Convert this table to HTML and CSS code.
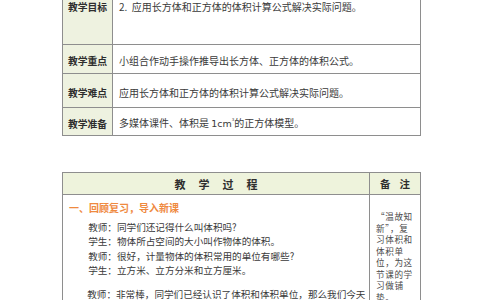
FILE: index.html
```html
<!DOCTYPE html>
<html lang="zh-CN">
<head>
<meta charset="utf-8">
<link rel="stylesheet" href="styles.css">
</head>
<body>
<div class="page">
  <table class="info">
    <tr class="r-goal">
      <th class="label label-goal">教学目标</th>
      <td class="content top">
        <p class="item">1.&nbsp;&nbsp;理解并掌握长方体和正方体的体积计算公式。</p>
        <p class="item">2.&nbsp;&nbsp;应用长方体和正方体的体积计算公式解决实际问题。</p>
      </td>
    </tr>
    <tr class="r-key">
      <th class="label">教学重点</th>
      <td class="content">小组合作动手操作推导出长方体、正方体的体积公式。</td>
    </tr>
    <tr class="r-hard">
      <th class="label">教学难点</th>
      <td class="content">应用长方体和正方体的体积计算公式解决实际问题。</td>
    </tr>
    <tr class="r-prep">
      <th class="label">教学准备</th>
      <td class="content">多媒体课件、体积是 <span class="unit">1cm<sup>3</sup></span>的正方体模型。</td>
    </tr>
  </table>

  <table class="process">
    <tr class="head">
      <th class="h-main"><span class="spaced">教学过程</span></th>
      <th class="h-note"><span class="spaced2">备注</span></th>
    </tr>
    <tr>
      <td class="body">
        <h3 class="section">一、回顾复习，导入新课</h3>
        <p class="line">教师：同学们还记得什么叫体积吗?</p>
        <p class="line">学生：物体所占空间的大小叫作物体的体积。</p>
        <p class="line">教师：很好，计量物体的体积常用的单位有哪些?</p>
        <p class="line">学生：立方米、立方分米和立方厘米。</p>
        <p class="line last">教师：非常棒，同学们已经认识了体积和体积单位，那么我们今天就来学习长方体和正方体的体积。</p>
      </td>
      <td class="note">“温故知<br>新”，复<br>习体积和<br>体积单<br>位，为这<br>节课的学<br>习做铺<br>垫。</td>
    </tr>
  </table>
</div>
</body>
</html>
```
FILE: styles.css
```css
html, body {
  margin: 0;
  padding: 0;
  background: #ffffff;
  overflow: hidden;
}
body {
  font-family: "Noto Sans CJK SC", "Noto Sans", sans-serif;
  color: #3a3a3a;
}
.page {
  padding-left: 62px;
  margin-top: -32px;
}
table {
  border-collapse: collapse;
  width: 359px;
  table-layout: fixed;
}
.info td, .info th, .process td, .process th {
  border: 1px solid #8e8e8e;
  padding: 0;
}
.label {
  width: 49px;
  background: #eef2e0;
  font-size: 9.8px;
  font-weight: 700;
  color: #2e2e2e;
  text-align: center;
  vertical-align: middle;
  padding-top: 4px !important;
}
.label.label-goal {
  padding-top: 0 !important;
}
.content {
  font-size: 10px;
  padding: 4px 0 0 6px !important;
  vertical-align: middle;
  line-height: 14px;
}
.content.top {
  vertical-align: top;
  padding-top: 17px !important;
}
.item {
  margin: 0;
  line-height: 14px;
}
.r-goal { height: 76px; }
.r-key { height: 29px; }
.r-hard { height: 34px; }
.r-prep { height: 28px; }
.unit {
  font-family: "DejaVu Sans", sans-serif;
  font-size: 9.5px;
}
.unit sup {
  font-size: 4px;
  vertical-align: 6px;
  line-height: 0;
}

.process {
  margin-top: 36px;
}
.process .head {
  height: 22px;
  background: #eef3dc;
}
.h-main {
  width: 306px;
  font-size: 11px;
  font-weight: 700;
  text-align: center;
  color: #2e2e2e;
  line-height: 20px;
}
.h-note {
  font-size: 10.5px;
  font-weight: 700;
  text-align: center;
  color: #2e2e2e;
  white-space: nowrap;
  line-height: 20px;
}
.spaced {
  letter-spacing: 13px;
  padding-left: 13px;
}
.spaced2 {
  letter-spacing: 9px;
  padding-left: 9px;
}
.body {
  vertical-align: top;
  padding: 6px 2px 0 6px !important;
}
.section {
  margin: 0 0 5px 0;
  font-size: 10px;
  line-height: 14px;
  font-weight: 700;
  color: #ef8a3f;
}
.line {
  margin: 0;
  font-size: 9.6px;
  line-height: 14.3px;
  text-indent: 2em;
}
.line.last {
  margin-top: 10px;
  text-indent: 1.9em;
}
.note {
  vertical-align: top;
  padding: 16px 0 0 6px !important;
  font-size: 8.6px;
  line-height: 11.5px;
  letter-spacing: 0.6px;
  color: #4a4a4a;
  white-space: nowrap;
}
```
